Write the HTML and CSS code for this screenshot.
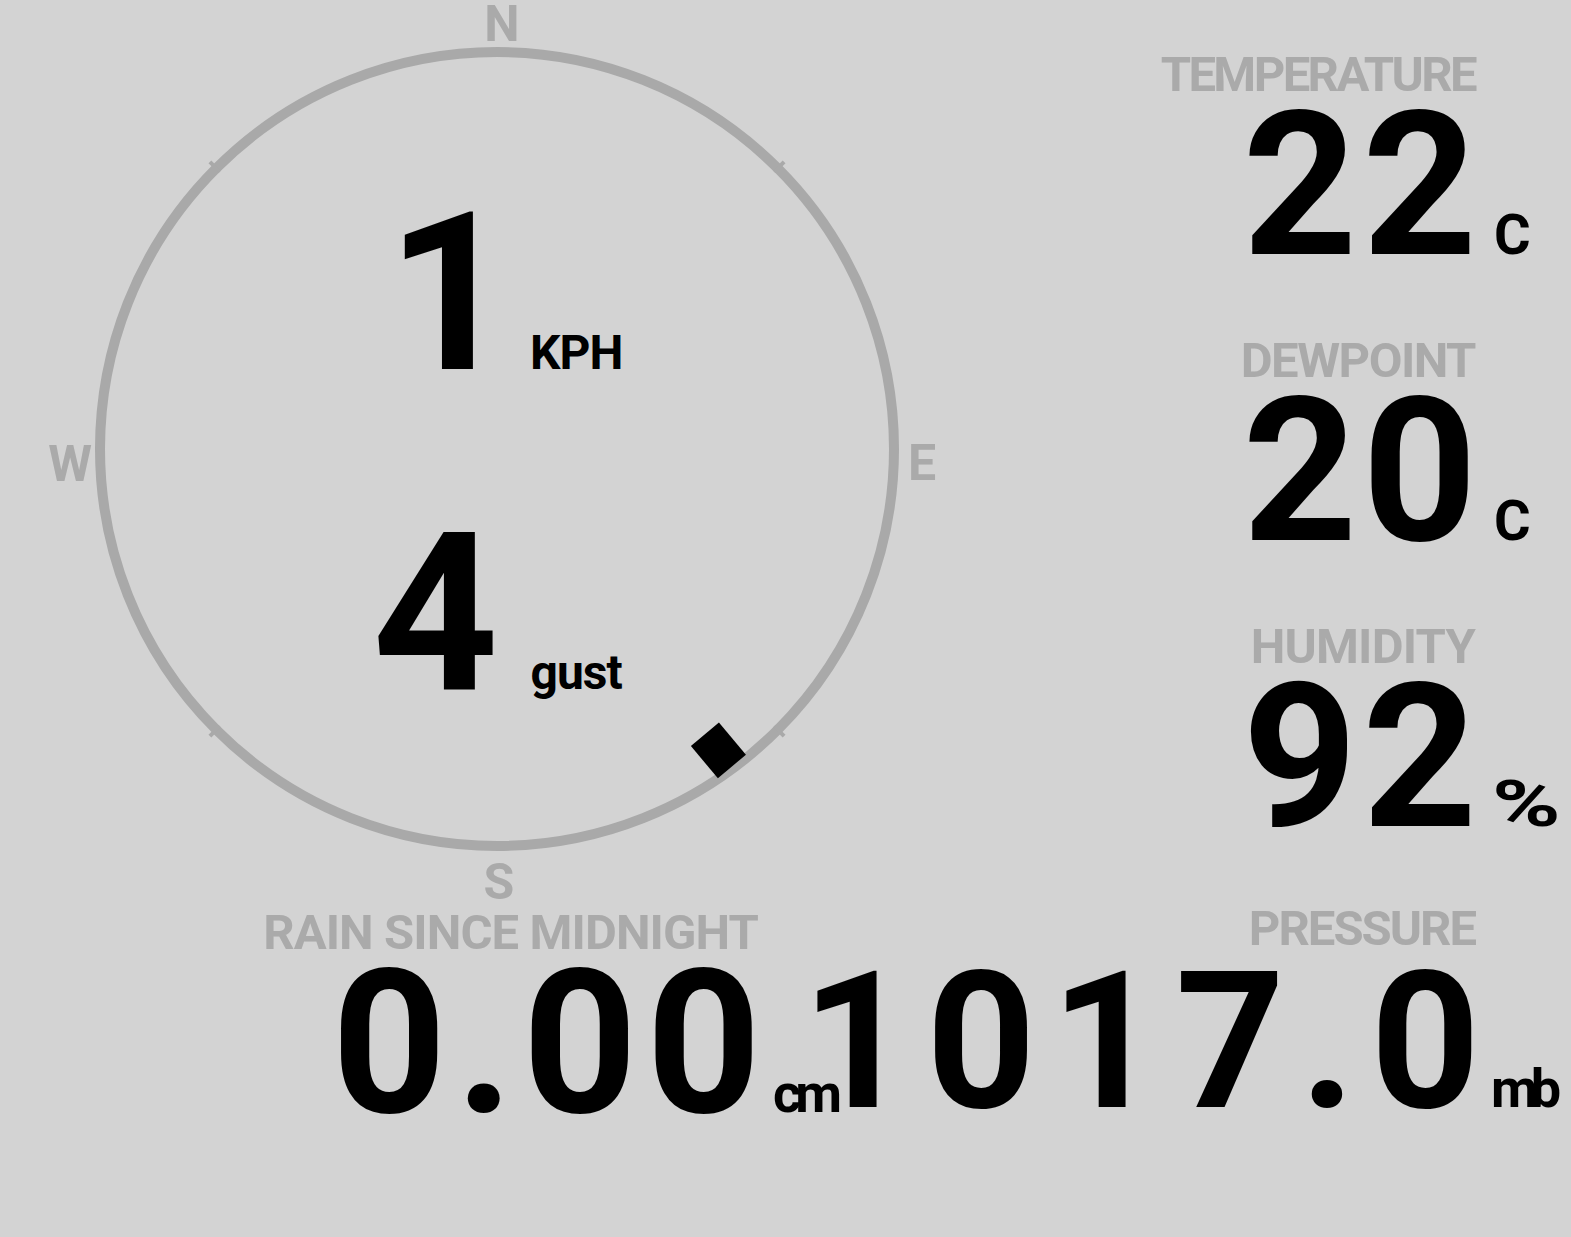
FILE: index.html
```html
<!DOCTYPE html>
<html lang="en">
<head>
<meta charset="utf-8">
<title>Weather</title>
<link rel="stylesheet" href="styles.css">
</head>
<body>
<div class="dash">
  <div class="top">
    <div class="compass">
      <svg class="dial" viewBox="0 0 994 904" width="994" height="904" aria-hidden="true">
        <circle class="ring" cx="497" cy="449" r="397"/>
        <g class="ticks">
          <line x1="497" y1="57" x2="497" y2="43" transform="rotate(45 497 449)"/>
          <line x1="497" y1="57" x2="497" y2="43" transform="rotate(135 497 449)"/>
          <line x1="497" y1="57" x2="497" y2="43" transform="rotate(225 497 449)"/>
          <line x1="497" y1="57" x2="497" y2="43" transform="rotate(315 497 449)"/>
        </g>
        <text class="card" x="502" y="41">N</text>
        <text class="card" x="922" y="480">E</text>
        <text class="card" x="499" y="899">S</text>
        <text class="card" x="70" y="481">W</text>
        <g transform="translate(497 449) rotate(143.7) translate(0 -374) rotate(-3.7)">
          <rect class="vane" x="-18.3" y="-21" width="36.6" height="42"/>
        </g>
      </svg>
      <div class="speed">
        <div class="speed-row wind"><span class="speed-num">1</span><span class="speed-unit">KPH</span></div>
        <div class="speed-row gust"><span class="speed-num">4</span><span class="speed-unit">gust</span></div>
      </div>
    </div>
    <div class="readings">
      <div class="reading temp">
        <div class="label">TEMPERATURE</div>
        <div class="num">22</div>
        <div class="unit deg">C</div>
      </div>
      <div class="reading dew">
        <div class="label">DEWPOINT</div>
        <div class="num">20</div>
        <div class="unit deg">C</div>
      </div>
      <div class="reading hum">
        <div class="label">HUMIDITY</div>
        <div class="num">92</div>
        <div class="unit pct"><span class="pct-glyph">%</span></div>
      </div>
    </div>
  </div>
  <div class="bottom">
    <div class="reading rain">
      <div class="label">RAIN SINCE MIDNIGHT</div>
      <div class="num">0.00</div>
      <div class="unit">cm</div>
    </div>
    <div class="reading pressure">
      <div class="label">PRESSURE</div>
      <div class="num">1017.0</div>
      <div class="unit">mb</div>
    </div>
  </div>
</div>
</body>
</html>
```
FILE: styles.css
```css
html, body {
  margin: 0;
  padding: 0;
  background: #d3d3d3;
}

body {
  width: 1571px;
  height: 1237px;
  overflow: hidden;
  font-family: Roboto, sans-serif;
  font-weight: 700;
  color: #000;
}

.dash {
  display: flex;
  flex-direction: column;
}

.top {
  display: flex;
  height: 904px;
}

/* compass */
.compass {
  position: relative;
  width: 994px;
  height: 904px;
  flex: none;
  display: flex;
  align-items: center;
  justify-content: center;
}

.dial {
  position: absolute;
  left: 0;
  top: 0;
  overflow: visible;
}

.ring {
  fill: none;
  stroke: #a9a9a9;
  stroke-width: 10;
}

.ticks line {
  stroke: #a9a9a9;
  stroke-width: 4;
}

.card {
  font-family: Roboto, sans-serif;
  font-weight: 700;
  font-size: 50px;
  fill: #aaaaaa;
  text-anchor: middle;
}

.vane {
  fill: #000;
}

.speed {
  position: relative;
  display: flex;
  flex-direction: column;
  align-items: center;
  gap: 120px;
  padding-top: 3px;
}

.speed-row {
  display: flex;
  align-items: baseline;
  gap: 32px;
}

.speed-row.wind {
  gap: 17px;
  padding-left: 15px;
}

.speed-num {
  font-family: Roboto, sans-serif;
  font-weight: 700;
  font-size: 220px;
  line-height: 200px;
}

.speed-unit {
  font-family: Roboto, sans-serif;
  font-size: 48px;
  line-height: 48px;
  letter-spacing: -1px;
}

/* readings */
.readings {
  flex: 1;
  display: flex;
  flex-direction: column;
  gap: 70px;
  padding-top: 50px;
}

.reading {
  display: grid;
  grid-template-columns: minmax(0, 1fr) 96px;
  row-gap: 7px;
}

.label {
  grid-column: 1;
  text-align: right;
  font-size: 49px;
  line-height: 49px;
  letter-spacing: -1.5px;
  color: #aaaaaa;
  white-space: nowrap;
}

.temp .label {
  letter-spacing: -2.6px;
}

.hum .label {
  letter-spacing: -0.8px;
}

.num {
  grid-column: 1;
  display: flex;
  justify-content: flex-end;
  align-self: baseline;
  font-size: 200px;
  line-height: 160px;
  letter-spacing: 5px;
  margin-right: -7px;
  white-space: nowrap;
}

.unit {
  grid-column: 2;
  align-self: baseline;
  padding-left: 14px;
  font-size: 54px;
  line-height: 58px;
  letter-spacing: -6px;
  white-space: nowrap;
}

.unit.deg {
  font-size: 56px;
  letter-spacing: 0;
  padding-left: 19px;
}

.unit.pct {
  font-size: 64px;
  letter-spacing: 0;
  padding-left: 17px;
}

.pct-glyph {
  display: inline-block;
  transform: scaleX(1.45);
  transform-origin: left center;
}

/* bottom row */
.bottom {
  display: flex;
}

.rain {
  width: 854px;
  flex: none;
  padding-top: 4px;
}

.rain .label {
  letter-spacing: -0.9px;
}

.rain .num {
  letter-spacing: 9px;
  margin-right: -12px;
}

.rain .unit {
  padding-left: 15px;
}

.pressure {
  flex: 1;
}

.pressure .label {
  letter-spacing: -2px;
}

.pressure .num {
  font-size: 191px;
  letter-spacing: 15px;
  margin-right: -20px;
}

.pressure .unit {
  padding-left: 16px;
  letter-spacing: -7px;
}
```
